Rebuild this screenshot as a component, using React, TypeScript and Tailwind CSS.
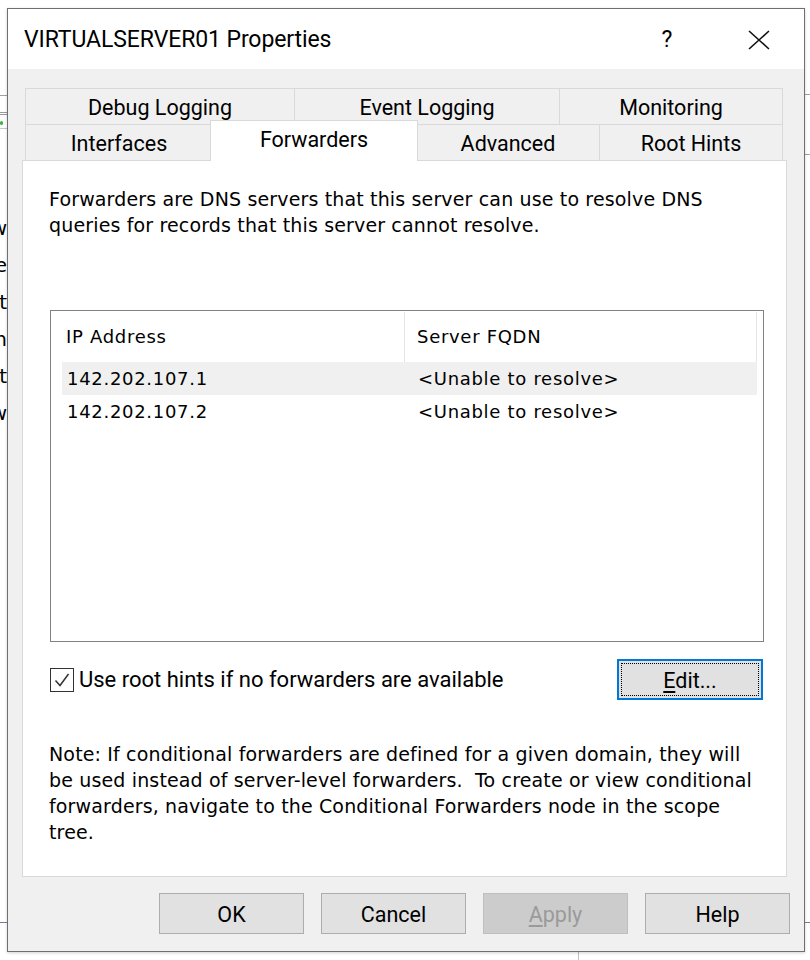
import React from "react";

const ui = "font-['Roboto','Open_Sans',sans-serif]";
const body = "font-['DejaVu_Sans','Verdana',sans-serif]";

const backRow = [
  { label: "Debug Logging", w: "w-[269px]" },
  { label: "Event Logging", w: "w-[265px]" },
  { label: "Monitoring", w: "w-[224px]" },
];

const rows = [
  { ip: "142.202.107.1", fqdn: "<Unable to resolve>", hot: true },
  { ip: "142.202.107.2", fqdn: "<Unable to resolve>", hot: false },
];

function Tab({ label, w, last }: { label: string; w: string; last?: boolean }) {
  return (
    <div
      className={`${w} flex h-[36px] items-center justify-center border-t border-l border-[#d9d9d9] bg-[#f0f0f0] pt-[3px] ${
        last ? "border-r" : ""
      }`}
    >
      {label}
    </div>
  );
}

function Button({ children, disabled }: { children: React.ReactNode; disabled?: boolean }) {
  return (
    <div
      className={`flex h-[41px] w-[145px] items-center justify-center border pt-[4px] ${
        disabled ? "border-[#bfbfbf] bg-[#cccccc] text-[#9a9a9a]" : "border-[#adadad] bg-[#e1e1e1] text-black"
      }`}
    >
      {children}
    </div>
  );
}

export default function App() {
  return (
    <div className={`relative h-[960px] w-[810px] overflow-hidden bg-white ${ui}`}>
      {/* background window peeking out */}
      <div className="absolute left-0 top-[95px] h-px w-[8px] bg-[#a0a0a0]" />
      <div className="absolute left-0 top-[112px] h-[3px] w-[8px] border-y border-[#9a9a9a]" />
      <div className="absolute left-0 top-[121px] h-[4px] w-[3px] rounded-full bg-[#3cb43c]" />
      <div className="absolute left-0 top-[128px] h-px w-[8px] bg-[#c8c8c8]" />
      <div className="absolute left-0 top-[922px] h-px w-[8px] bg-[#7a7a9a]" />
      <div className="absolute right-0 top-[94px] h-px w-[6px] bg-[#a0a0a0]" />
      <div className="absolute right-0 top-[154px] h-px w-[6px] bg-[#a0a0a0]" />
      <div className="absolute right-0 top-[922px] h-px w-[6px] bg-[#7a7a9a]" />
      <div className="absolute left-[578px] top-[952px] h-[8px] w-px bg-[#c0c0c0]" />
      <div className={`absolute left-0 top-[210px] flex w-[7px] flex-col items-end overflow-hidden text-[20px] text-black ${body}`}>
        {["w", "re", "st", "n", "ot", "w"].map((t, i) => (
          <div key={i} className="h-[37px] whitespace-nowrap leading-[37px]">
            {t}
          </div>
        ))}
      </div>

      {/* dialog */}
      <div className="absolute left-[7px] top-[8px] flex h-[944px] w-[798px] flex-col border border-[#6f6f6f] bg-[#f0f0f0] shadow-[0_1px_3px_rgba(0,0,0,0.18)]">
        {/* title bar */}
        <div className="flex h-[60px] shrink-0 items-center bg-white pl-[16px] pt-[2px] text-black">
          <div className="text-[23px] tracking-[-0.1px]">VIRTUALSERVER01 Properties</div>
          <div className="ml-auto flex w-[46px] justify-center text-[23px]">?</div>
          <div className="ml-[46px] mr-[22px] flex w-[46px] justify-center">
            <svg width="24" height="20" viewBox="0 0 24 20">
              <path d="M2 1 L22 19 M22 1 L2 19" stroke="#111" strokeWidth="1.6" fill="none" />
            </svg>
          </div>
        </div>

        {/* tabs */}
        <div className="ml-[17px] mt-[19px] w-[758px] text-[21.5px] text-black">
          <div className="flex">
            {backRow.map((t, i) => (
              <Tab key={t.label} label={t.label} w={t.w} last={i === backRow.length - 1} />
            ))}
          </div>
          <div className="flex">
            <Tab label="Interfaces" w="w-[187px]" />
            <div className="relative h-[36px] w-[204px] border-t border-[#d9d9d9]">
              <div className="absolute -left-[2px] -right-[2px] -top-[5px] bottom-[-1px] z-10 flex items-center justify-center border border-b-0 border-[#d9d9d9] bg-white pb-[2px]">
                Forwarders
              </div>
            </div>
            <Tab label="Advanced" w="w-[183px]" />
            <Tab label="Root Hints" w="w-[184px]" last />
          </div>
        </div>

        {/* page */}
        <div className={`ml-[14px] flex h-[717px] w-[765px] flex-col border border-[#d9d9d9] bg-white px-[26px] pt-[25px] text-[19px] leading-[26px] tracking-[0.15px] text-black ${body}`}>
          <p className="whitespace-nowrap">
            Forwarders are DNS servers that this server can use to resolve DNS
            <br />
            queries for records that this server cannot resolve.
          </p>

          <div className="ml-[1px] mt-[72px] h-[332px] w-[714px] border border-[#828282] pl-[11px] pt-px text-[18px] tracking-[0.7px]">
            <div className="flex h-[50px] items-center">
              <div className="flex h-full w-[343px] items-center border-r border-[#e5e5e5] pl-[4px]">IP Address</div>
              <div className="flex h-full w-[352px] items-center border-r border-[#e5e5e5] pl-[12px]">Server FQDN</div>
            </div>
            {rows.map((r) => (
              <div key={r.ip} className={`flex h-[33px] w-[695px] items-center ${r.hot ? "bg-[#f0f0f0]" : ""}`}>
                <div className="w-[343px] pl-[5px]">{r.ip}</div>
                <div className="pl-[13px]">{r.fqdn}</div>
              </div>
            ))}
          </div>

          <div className={`ml-[1px] mt-[17px] flex h-[41px] w-[713px] items-center ${ui} text-[22px] tracking-normal`}>
            <div className="flex h-[24px] w-[24px] items-center justify-center border border-[#333] bg-white">
              <svg width="20" height="20" viewBox="0 0 20 20">
                <path d="M3.5 10.5 L8 15.5 L16.5 4" stroke="#333" strokeWidth="1.5" fill="none" />
              </svg>
            </div>
            <span className="ml-[5px]">Use root hints if no forwarders are available</span>
            <div className="relative ml-auto flex h-[41px] w-[146px] items-center justify-center border-2 border-[#0078d7] bg-[#e1e1e1] pt-[2px] text-[21.5px]">
              <div className="absolute inset-[2px] border border-dotted border-black" />
              <span>
                <span className="underline underline-offset-[3px]">E</span>dit...
              </span>
            </div>
          </div>

          <p className="mt-[41px] whitespace-pre">
            {"Note: If conditional forwarders are defined for a given domain, they will\nbe used instead of server-level forwarders.  To create or view conditional\nforwarders, navigate to the Conditional Forwarders node in the scope\ntree."}
          </p>
        </div>

        {/* buttons */}
        <div className="mr-[14px] mt-[16px] flex justify-end gap-[17px] text-[21.5px]">
          <Button>OK</Button>
          <Button>Cancel</Button>
          <Button disabled>
            <span>
              <span className="underline underline-offset-[3px]">A</span>pply
            </span>
          </Button>
          <Button>Help</Button>
        </div>
      </div>
    </div>
  );
}
